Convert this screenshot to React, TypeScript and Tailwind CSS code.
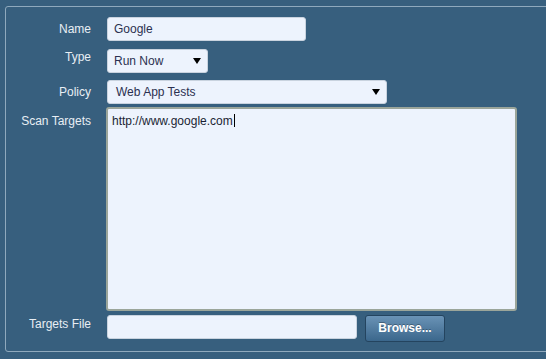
import React from "react";

const Tri = () => (
  <svg width="8" height="6" viewBox="0 0 8 6" className="shrink-0">
    <polygon points="0,0 8,0 4,6" fill="#000" />
  </svg>
);

export default function App() {
  return (
    <div
      className="w-[546px] h-[359px] overflow-hidden bg-[#375f7e] pt-[6px] pl-[5px] text-[12px]"
      style={{ fontFamily: '"Liberation Sans", Arial, sans-serif' }}
    >
      <div className="w-[600px] h-[346px] rounded-[3px] border border-[#8fa9bd] pt-[10px]">
        <div className="flex flex-col">
          {/* Name */}
          <div className="flex">
            <div className="w-[85px] text-right text-[#e8eef4] leading-[24px]">Name</div>
            <div className="ml-[16px] w-[199px] h-[24px] rounded-[3px] border border-[#c9d3df] bg-[#edf3fd] pl-[6px] leading-[22px] text-[#2b3050]">
              Google
            </div>
          </div>
          {/* Type */}
          <div className="flex mt-[8px]">
            <div className="w-[85px] text-right text-[#e8eef4] leading-[14px] pt-[1px]">Type</div>
            <div className="ml-[16px] w-[101px] h-[24px] rounded-[3px] border border-[#c9d3df] bg-[#edf3fd] pl-[6px] pr-[6px] flex items-center justify-between text-[#2b3050]">
              <span className="leading-[22px]">Run Now</span>
              <Tri />
            </div>
          </div>
          {/* Policy */}
          <div className="flex mt-[7px]">
            <div className="w-[85px] text-right text-[#e8eef4] leading-[24px]">Policy</div>
            <div className="ml-[16px] w-[280px] h-[24px] rounded-[3px] border border-[#c9d3df] bg-[#edf3fd] pl-[8px] pr-[6px] flex items-center justify-between text-[#2b3050]">
              <span className="leading-[22px]">Web App Tests</span>
              <Tri />
            </div>
          </div>
          {/* Scan Targets */}
          <div className="flex mt-[3px]">
            <div className="w-[85px] text-right text-[#e8eef4] leading-[14px] pt-[7px]">Scan Targets</div>
            <div className="ml-[15px] w-[411px] h-[204px] rounded-[3px] border-2 border-[#9ba59a] bg-[#edf3fd] pl-[4px] pt-[5px] leading-[14px] text-[#1a1f33]">
              http://www.google.com
              <span className="inline-block w-px h-[13px] bg-black align-[-2px] ml-[1px]" />
            </div>
          </div>
          {/* Targets File */}
          <div className="flex mt-[4px]">
            <div className="w-[85px] text-right text-[#e8eef4] leading-[14px] pt-[2px]">Targets File</div>
            <div className="ml-[16px] w-[250px] h-[24px] rounded-[3px] border border-[#c9d3df] bg-[#edf3fd]" />
            <button className="ml-[8px] w-[80px] h-[27px] rounded-[3px] border border-[#24445f] bg-gradient-to-b from-[#6a93b6] to-[#3b678c] text-white font-bold text-[12px] leading-[25px] [text-shadow:0_-1px_0_rgba(0,0,0,0.3)]">
              Browse...
            </button>
          </div>
        </div>
      </div>
    </div>
  );
}
